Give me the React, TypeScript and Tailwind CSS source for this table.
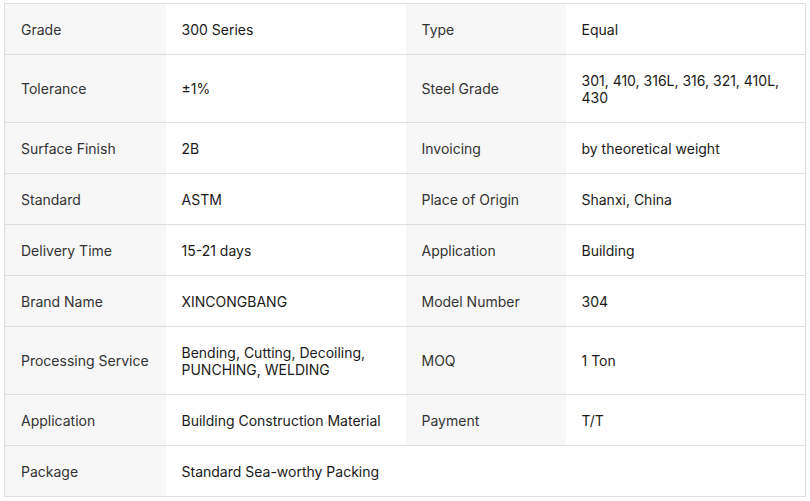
import { FC } from 'react';

type Spec = [string, string, string?, string?];

const rows: Spec[] = [
  ['Grade', '300 Series', 'Type', 'Equal'],
  ['Tolerance', '±1%', 'Steel Grade', '301, 410, 316L, 316, 321, 410L, 430'],
  ['Surface Finish', '2B', 'Invoicing', 'by theoretical weight'],
  ['Standard', 'ASTM', 'Place of Origin', 'Shanxi, China'],
  ['Delivery Time', '15-21 days', 'Application', 'Building'],
  ['Brand Name', 'XINCONGBANG', 'Model Number', '304'],
  ['Processing Service', 'Bending, Cutting, Decoiling, PUNCHING, WELDING', 'MOQ', '1 Ton'],
  ['Application', 'Building Construction Material', 'Payment', 'T/T'],
  ['Package', 'Standard Sea-worthy Packing'],
];

const labelCls = 'bg-[#f7f7f7] px-4 py-[16.5px] text-left align-middle font-normal text-[#333]';
const valueCls = 'px-4 py-[16.5px] align-middle text-[#1a1a1a]';

const App: FC = () => {
  return (
    <div className="min-h-[501px] bg-white px-[4px] pt-[3px]" style={{ fontFamily: 'Inter, "Noto Sans", sans-serif' }}>
      <table className="w-full table-fixed border-collapse border border-[#dedede] text-[14px] leading-[17px]">
        <colgroup>
          <col className="w-[161px]" />
          <col className="w-[240px]" />
          <col className="w-[160px]" />
          <col className="w-[240px]" />
        </colgroup>
        <tbody>
          {rows.map(([l1, v1, l2, v2], i) => (
            <tr key={i} className="border-b border-[#dedede]">
              <th className={labelCls}>{l1}</th>
              <td className={valueCls}>{v1}</td>
              {l2 ? (
                <>
                  <th className={labelCls}>{l2}</th>
                  <td className={valueCls}>{v2}</td>
                </>
              ) : (
                <>
                  <td className="px-4 py-[16.5px]" />
                  <td className="px-4 py-[16.5px]" />
                </>
              )}
            </tr>
          ))}
        </tbody>
      </table>
    </div>
  );
};

export default App;
